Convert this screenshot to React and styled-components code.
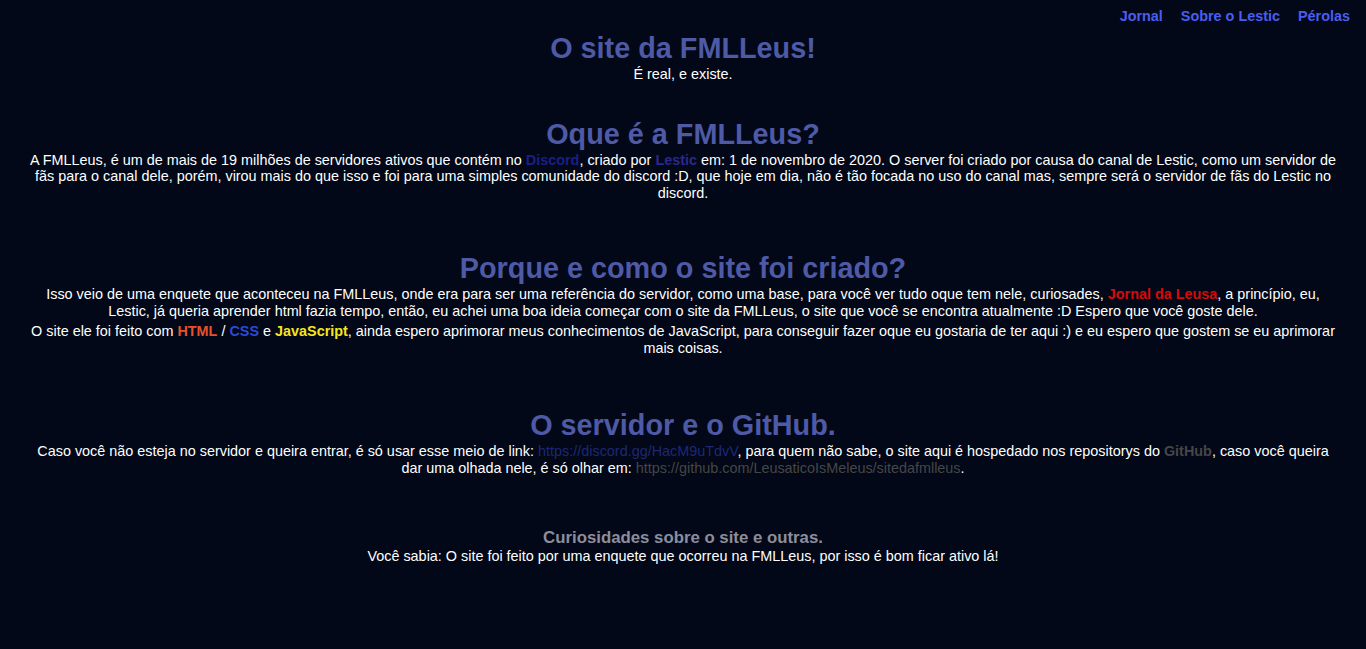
import styled, { createGlobalStyle } from 'styled-components';

const GlobalStyle = createGlobalStyle`
    html, body {
        margin: 0;
        padding: 0;
        background-color: #020817;
    }
    body {
        font-family: "Liberation Sans", Arial, sans-serif;
        color: white;
        min-height: 649px;
    }
`;

const Page = styled.div`
    padding: 0 8px;
`;

const Nav = styled.nav`
    display: flex;
    justify-content: flex-end;
    gap: 18px;
    padding: 8px 8px 0 0;
`;

const NavLink = styled.a`
    color: #4b5df0;
    font-size: 14.4px;
    font-weight: 700;
    text-decoration: none;
`;

const Main = styled.main`
    text-align: center;
    padding: 0 19px;
`;

const Section = styled.section`
    margin-top: ${(p) => p.$top}px;
`;

const Titulo = styled.h1`
    margin: 0;
    color: #4e5aa6;
    font-size: 28.8px;
    line-height: 35px;
    font-weight: 700;
`;

const SubTitulo = styled.h3`
    margin: 0;
    color: #8b8e9e;
    font-size: 16.8px;
    font-weight: 700;
`;

const Texto = styled.p`
    margin: 0 0 ${(p) => (p.$gap ? 4 : 0)}px 0;
    font-size: 14.4px;
    line-height: 16.5px;
`;

const Link = styled.a`
    color: ${(p) => p.$cor};
    font-weight: ${(p) => (p.$bold ? 700 : 400)};
    text-decoration: none;
`;

export default function App() {
    return (
        <>
            <GlobalStyle />
            <Page>
                <Nav>
                    <NavLink href="#">Jornal</NavLink>
                    <NavLink href="#">Sobre o Lestic</NavLink>
                    <NavLink href="#">Pérolas</NavLink>
                </Nav>
                <Main>
                    <Section $top={7}>
                        <Titulo>O site da FMLLeus!</Titulo>
                        <Texto>É real, e existe.</Texto>
                    </Section>
                    <Section $top={34}>
                        <Titulo>Oque é a FMLLeus?</Titulo>
                        <Texto>
                            A FMLLeus, é um de mais de 19 milhões de servidores ativos que contém no{' '}
                            <Link href="#" $cor="#1c1e86" $bold>Discord</Link>, criado por{' '}
                            <Link href="#" $cor="#2b2790" $bold>Lestic</Link> em: 1 de novembro de 2020. O server foi criado por causa do canal de Lestic, como um servidor de fãs para o canal dele, porém, virou mais do que isso e foi para uma simples comunidade do discord :D, que hoje em dia, não é tão focada no uso do canal mas, sempre será o servidor de fãs do Lestic no discord.
                        </Texto>
                    </Section>
                    <Section $top={50}>
                        <Titulo>Porque e como o site foi criado?</Titulo>
                        <Texto $gap>
                            Isso veio de uma enquete que aconteceu na FMLLeus, onde era para ser uma referência do servidor, como uma base, para você ver tudo oque tem nele, curiosades,{' '}
                            <Link href="#" $cor="#d40b0b" $bold>Jornal da Leusa</Link>, a princípio, eu, Lestic, já queria aprender html fazia tempo, então, eu achei uma boa ideia começar com o site da FMLLeus, o site que você se encontra atualmente :D Espero que você goste dele.
                        </Texto>
                        <Texto>
                            O site ele foi feito com <Link href="#" $cor="#e8502a" $bold>HTML</Link> /{' '}
                            <Link href="#" $cor="#2c4ad8" $bold>CSS</Link> e{' '}
                            <Link href="#" $cor="#f5e61c" $bold>JavaScript</Link>, ainda espero aprimorar meus conhecimentos de JavaScript, para conseguir fazer oque eu gostaria de ter aqui :) e eu espero que gostem se eu aprimorar mais coisas.
                        </Texto>
                    </Section>
                    <Section $top={52}>
                        <Titulo>O servidor e o GitHub.</Titulo>
                        <Texto>
                            Caso você não esteja no servidor e queira entrar, é só usar esse meio de link:{' '}
                            <Link href="#" $cor="#1f2775">https://discord.gg/HacM9uTdvV</Link>, para quem não sabe, o site aqui é hospedado nos repositorys do{' '}
                            <Link href="#" $cor="#464646" $bold>GitHub</Link>, caso você queira dar uma olhada nele, é só olhar em:{' '}
                            <Link href="#" $cor="#464646">https://github.com/LeusaticoIsMeleus/sitedafmlleus</Link>.
                        </Texto>
                    </Section>
                    <Section $top={52}>
                        <SubTitulo>Curiosidades sobre o site e outras.</SubTitulo>
                        <Texto>Você sabia: O site foi feito por uma enquete que ocorreu na FMLLeus, por isso é bom ficar ativo lá!</Texto>
                    </Section>
                </Main>
            </Page>
        </>
    );
}
